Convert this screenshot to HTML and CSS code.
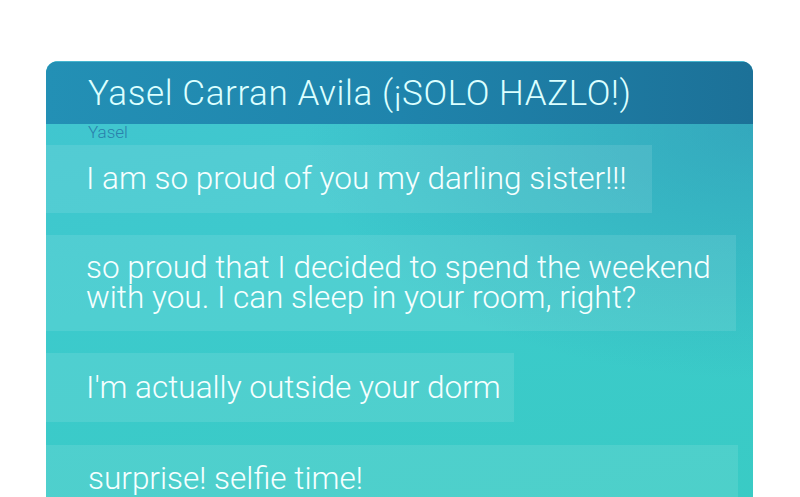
FILE: index.html
```html
<!DOCTYPE html>
<html>
<head>
<meta charset="utf-8">
<link rel="stylesheet" href="styles.css">
</head>
<body>
<div class="card">
  <div class="header">Yasel Carran Avila (¡SOLO HAZLO!)</div>
  <div class="thread">
    <div class="sender">Yasel</div>
    <div class="bubble b1">I am so proud of you my darling sister!!!</div>
    <div class="bubble b2">so proud that I decided to spend the weekend<br>with you. I can sleep in your room, right?</div>
    <div class="bubble b3">I'm actually outside your dorm</div>
    <div class="bubble b4">surprise! selfie time!</div>
  </div>
</div>
</body>
</html>
```
FILE: styles.css
```css
html, body {
  margin: 0;
  padding: 0;
  background: #ffffff;
  overflow: hidden;
  height: 497px;
}
body {
  font-family: "Roboto", "Liberation Sans", sans-serif;
  font-weight: 300;
}
.card {
  margin: 61px 47px 0 46px;
  height: 460px;
  border-radius: 12px 12px 0 0;
  overflow: hidden;
  background:
    radial-gradient(ellipse at 100% 15%, rgba(40, 130, 170, 0.45) 0%, rgba(40, 130, 170, 0) 45%),
    linear-gradient(170deg, #42c5d0 0%, #3ccacc 45%, #39cbc4 100%);
}
.header {
  height: 63px;
  box-sizing: border-box;
  padding-left: 42px;
  display: flex;
  align-items: center;
  font-size: 35px;
  letter-spacing: 0.6px;
  color: #dcffff;
  background: linear-gradient(90deg, #2390b5 0%, #1f84ac 50%, #1c7198 100%);
  border-top: 1px solid #45b5cf;
}
.thread {
  display: flex;
  flex-direction: column;
  align-items: flex-start;
}
.sender {
  margin-left: 42px;
  font-size: 17px;
  font-weight: 300;
  line-height: 17px;
  height: 21px;
  color: #2a80ac;
}
.bubble {
  box-sizing: border-box;
  padding-left: 40px;
  font-size: 31.5px;
  line-height: 30px;
  color: #f6ffff;
  background: rgba(255, 255, 255, 0.1);
  display: flex;
  align-items: center;
  margin-bottom: 22px;
}
.b1 { width: 606px; height: 68px; }
.b2 { width: 690px; height: 96px; }
.b3 { width: 468px; height: 69px; margin-bottom: 23px; }
.b4 { width: 692px; height: 68px; padding-left: 42px; }
```
